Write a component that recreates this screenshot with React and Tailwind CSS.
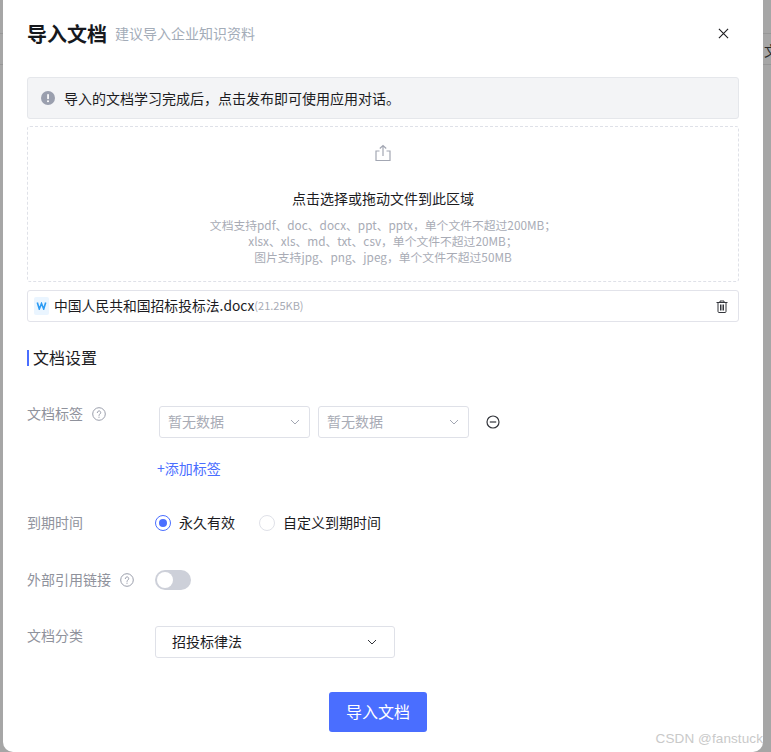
import React from "react";

const Help = () => (
  <svg width="14" height="14" viewBox="0 0 14 14" fill="none" stroke="#9a9eab" strokeWidth="1" className="shrink-0 ml-[1px]">
    <circle cx="7" cy="7" r="6.3" />
    <path d="M5.3 5.6a1.7 1.7 0 1 1 2.6 1.4c-.6.4-.9.7-.9 1.4" strokeLinecap="round" />
    <circle cx="7" cy="10.2" r=".6" fill="#9a9eab" stroke="none" />
  </svg>
);
const Chevron = ({ color = "#a3a7b3", size = 12 }) => (
  <svg width={size} height={size} viewBox="0 0 12 12" fill="none" stroke={color} strokeWidth="1" className="shrink-0">
    <path d="M2 4l4 4 4-4" />
  </svg>
);
const TagSelect = () => (
  <div className="w-[151px] h-[32px] flex items-center justify-between pl-[8px] pr-[8px] bg-white border border-[#dfe1e8] rounded-[3px] text-[14px] text-[#a8abb5]">
    <span className="pb-[2px]">暂无数据</span>
    <Chevron />
  </div>
);
const Label = ({ children, help }) => (
  <div className="w-[128px] flex items-center gap-[8px] text-[14px] leading-[16px] text-[#8f929c] shrink-0">
    <span className="pb-[2px]">{children}</span>
    {help && <Help />}
  </div>
);

export default function App() {
  return (
    <div className="relative w-[771px] h-[752px] overflow-hidden bg-[#a6a6a6] font-['Noto_Sans_CJK_SC','Noto_Sans',sans-serif]">
      <div className="absolute left-0 right-0 top-[33px] h-px bg-[#979797]" />
      <div className="absolute left-0 right-0 top-[64px] h-px bg-[#979797]" />
      <div className="absolute left-[764px] top-[41px] text-[14px] leading-[18px] text-[#2a2a2a]">文</div>
      <div className="relative ml-[3px] w-[760px] h-[752px] bg-white rounded-b-[10px] pl-[24px] pr-[24px] flex flex-col">
        <div className="h-[77px] flex items-start justify-between shrink-0">
          <div className="flex items-center gap-[8px] mt-[20px] h-[28px]">
            <span className="text-[20px] font-bold text-[#16181d] leading-[28px]">导入文档</span>
            <span className="text-[14px] text-[#a3acb8] leading-[26px] mb-[2px]">建议导入企业知识资料</span>
          </div>
          <svg width="11" height="11" viewBox="0 0 12 12" fill="none" stroke="#1c1c1f" strokeWidth="1.2" className="mt-[28px] mr-[10px]">
            <path d="M1 1l10 10M11 1L1 11" />
          </svg>
        </div>

        <div className="h-[42px] flex items-center gap-[9px] px-[13px] bg-[#f3f4f6] border border-[#e5e7eb] rounded-[3px] text-[14px] text-[#1c1c1f] shrink-0">
          <svg width="14" height="14" viewBox="0 0 14 14" className="shrink-0">
            <circle cx="7" cy="7" r="7" fill="#9a9fae" />
            <rect x="6.2" y="3" width="1.7" height="5.2" rx=".8" fill="#fff" />
            <circle cx="7" cy="10.2" r="1" fill="#fff" />
          </svg>
          <span>导入的文档学习完成后，点击发布即可使用应用对话。</span>
        </div>

        <div className="mt-[7px] h-[156px] flex flex-col items-center border border-dashed border-[#dfe1e8] rounded-[3px] shrink-0">
          <svg width="18" height="18" viewBox="0 0 18 18" fill="none" stroke="#a3a7b3" strokeWidth="1.2" className="mt-[17px]">
            <path d="M5.5 7H2v9.5h14V7h-3.5M9 12V1.5M5.8 4.5L9 1.5l3.2 3" />
          </svg>
          <div className="mt-[26px] text-[14px] leading-[20px] text-[#1c1c1f]">点击选择或拖动文件到此区域</div>
          <div className="mt-[9px] text-[11.8px] leading-[16px] text-[#a8abb5] text-center">
            <div>文档支持pdf、doc、docx、ppt、pptx，单个文件不超过200MB；</div>
            <div>xlsx、xls、md、txt、csv，单个文件不超过20MB；</div>
            <div>图片支持jpg、png、jpeg，单个文件不超过50MB</div>
          </div>
        </div>

        <div className="mt-[8px] h-[32px] flex items-center justify-between pl-[6px] pr-[10px] border border-[#e2e3ea] rounded-[3px] shrink-0">
          <div className="flex items-center gap-[5px]">
            <span className="w-[15px] h-[18px] flex items-center justify-center bg-[#eaf5ff] rounded-[2px]">
              <svg width="11" height="8" viewBox="0 0 10 8" fill="none" stroke="#2b9bf4" strokeWidth="1.6">
                <path d="M.8.5l2 6.5L5 1.5 7.2 7l2-6.5" />
              </svg>
            </span>
            <span className="text-[13.8px] text-[#1c1c1f] pb-[1px]">中国人民共和国招标投标法.docx</span>
            <span className="text-[11px] text-[#a8abb5] -ml-[5px] pb-[1px]">(21.25KB)</span>
          </div>
          <svg width="12" height="13" viewBox="0 0 12 13" fill="none" stroke="#33353b" strokeWidth="1">
            <path d="M.5 2.5h11M4 2.5V1h4v1.5M2 2.5V11.5a1 1 0 0 0 1 1h6a1 1 0 0 0 1-1V2.5M4.5 4.5v6M6 4.5v6M7.5 4.5v6" />
          </svg>
        </div>

        <div className="mt-[28px] h-[16px] flex items-center border-l-2 border-[#4a6eff] pl-[4px] shrink-0">
          <span className="text-[16px] leading-[16px] text-[#1c1c1f] pb-[2px]">文档设置</span>
        </div>

        <div className="mt-[39px] flex items-start shrink-0">
          <Label help>文档标签</Label>
          <div className="ml-[4px] mt-[1px] flex items-center gap-[8px]">
            <TagSelect />
            <TagSelect />
            <svg width="14" height="14" viewBox="0 0 14 14" fill="none" stroke="#33353b" strokeWidth="1.2" className="ml-[9px]">
              <circle cx="7" cy="7" r="6" />
              <path d="M3.8 7h6.4" />
            </svg>
          </div>
        </div>

        <div className="mt-[20px] ml-[130px] text-[14px] leading-[20px] text-[#4a6eff] shrink-0">+添加标签</div>

        <div className="mt-[35px] flex items-center h-[20px] shrink-0">
          <Label>到期时间</Label>
          <div className="flex items-center gap-[8px] text-[14px] text-[#1c1c1f]">
            <span className="w-[16px] h-[16px] rounded-full border border-[#4a6eff] flex items-center justify-center">
              <span className="w-[8px] h-[8px] rounded-full bg-[#4a6eff]" />
            </span>
            <span className="pb-[2px]">永久有效</span>
            <span className="ml-[16px] w-[16px] h-[16px] rounded-full border border-[#dfe1e8]" />
            <span className="pb-[2px]">自定义到期时间</span>
          </div>
        </div>

        <div className="mt-[37px] flex items-center h-[20px] shrink-0">
          <Label help>外部引用链接</Label>
          <div className="w-[36px] h-[20px] rounded-full bg-[#cdd0d9] p-[2px]">
            <div className="w-[16px] h-[16px] rounded-full bg-white" />
          </div>
        </div>

        <div className="mt-[36px] flex items-start shrink-0">
          <div className="pt-[1px]"><Label>文档分类</Label></div>
          <div className="w-[240px] h-[32px] flex items-center justify-between pl-[16px] pr-[16px] border border-[#dfe1e8] rounded-[3px] text-[14px] text-[#1c1c1f]">
            <span className="pb-[2px]">招投标律法</span>
            <Chevron color="#33353b" />
          </div>
        </div>

        <div className="mt-[34px] flex justify-center pr-[10px] shrink-0">
          <button className="w-[98px] h-[40px] bg-[#4a6eff] text-white text-[16px] rounded-[3px] pb-[2px]">导入文档</button>
        </div>
      </div>
      <div className="absolute right-[8px] bottom-[3px] text-[13.5px] leading-[20px] tracking-[0.1px] text-[#c9c9c9] font-['Liberation_Sans',sans-serif]">CSDN @fanstuck</div>
    </div>
  );
}
